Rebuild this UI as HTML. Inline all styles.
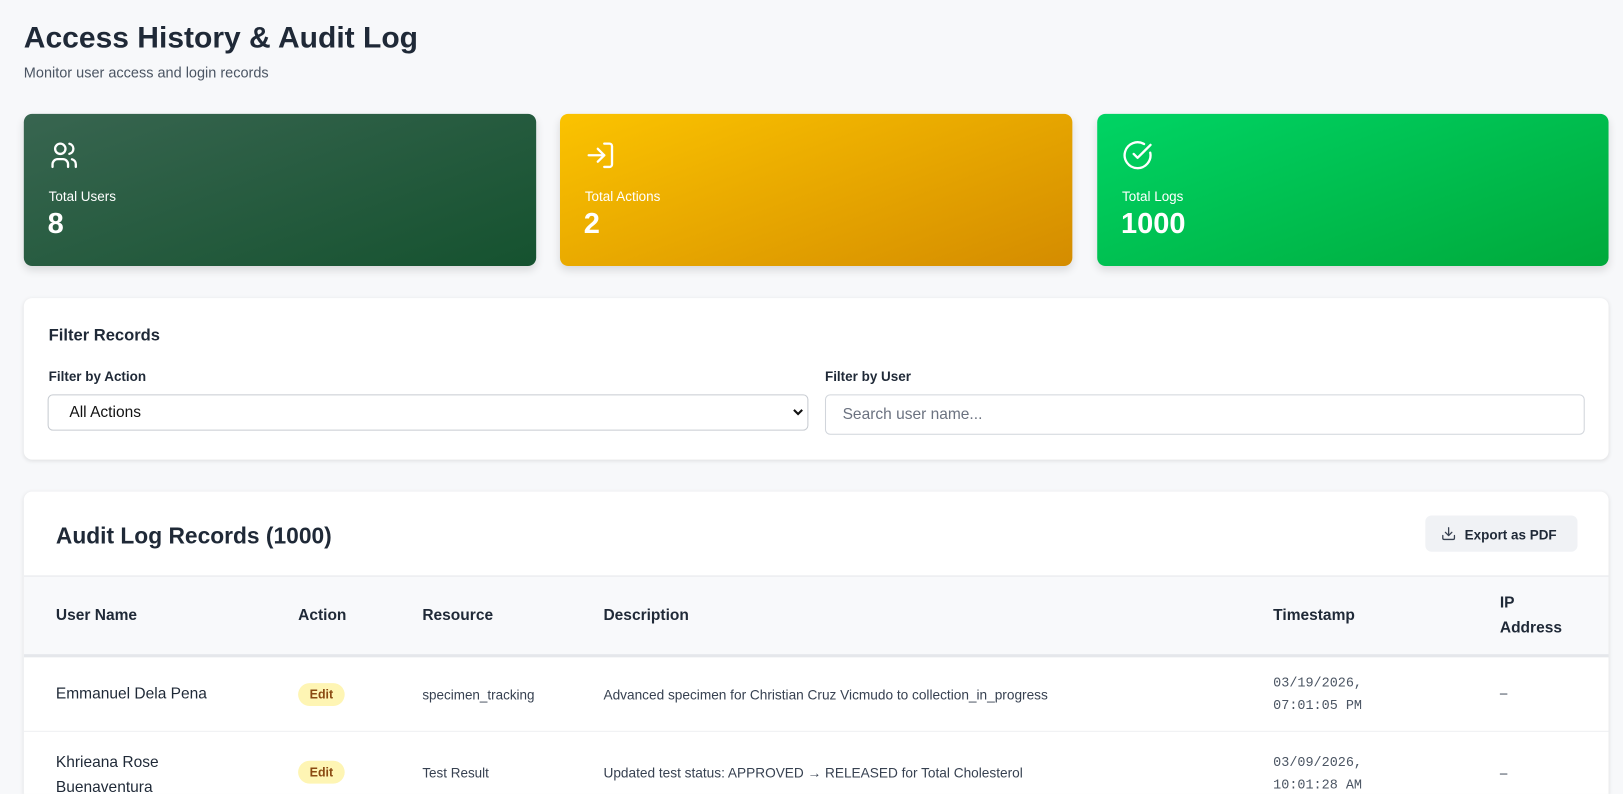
<!DOCTYPE html>
<html><head><style>
*{box-sizing:border-box;margin:0;padding:0}
html,body{width:1623px;height:794px;overflow:hidden;background:#f7f8fa}
body{font-family:"Liberation Sans",Arial,sans-serif;color:#1f2937;position:relative}
#w{position:absolute;left:0;top:0;width:1568px;height:767px;overflow:hidden;transform:scale(1.0351);transform-origin:0 0}
.a{position:absolute}
h1{position:absolute;left:23px;top:21px;font-size:29px;font-weight:700;color:#1f2937}
.card{position:absolute;top:110px;height:147px;width:495px;border-radius:8px;box-shadow:0 4px 8px rgba(0,0,0,.12);color:#fff}
.card svg{position:absolute;left:24px;top:25px}
.card .l{position:absolute;left:24px;top:72px;font-size:13px}
.card .n{position:absolute;left:23px;top:90px;font-size:28px;font-weight:700}
.panel{position:absolute;left:23px;width:1531px;background:#fff;border-radius:8px;box-shadow:0 1px 4px rgba(0,0,0,.1)}
.lab{position:absolute;font-size:13px;font-weight:700;color:#1f2937}
.th{position:absolute;font-size:15px;font-weight:700;color:#1f2937;line-height:24px}
.td{position:absolute;font-size:13px;color:#374151}
.mono{font-family:"Liberation Mono",monospace;font-size:13px;line-height:22px;color:#4b5563}
.badge{position:absolute;left:265px;width:45px;height:22px;border-radius:11px;background:#fef5b4;color:#8a4a12;font-size:12px;font-weight:700;text-align:center;line-height:22px}
</style></head><body><div id="w">
<h1>Access History &amp; Audit Log</h1>
<div class="a" style="left:23px;top:62px;font-size:14px;color:#4b5563">Monitor user access and login records</div>

<div class="card" style="left:23px;background:linear-gradient(160deg,#386550,#15522f)">
<svg width="30" height="30" viewBox="0 0 24 24" fill="none" stroke="#fff" stroke-width="1.8" stroke-linecap="round"><circle cx="9" cy="7" r="4"/><path d="M3 21v-2a4 4 0 0 1 4-4h4a4 4 0 0 1 4 4v2"/><path d="M16 3.1a4 4 0 0 1 0 7.8"/><path d="M21 21v-2a4 4 0 0 0-3-3.9"/></svg>
<div class="l">Total Users</div><div class="n">8</div></div>
<div class="card" style="left:541px;background:linear-gradient(160deg,#fbc300,#d48c00)">
<svg width="30" height="30" viewBox="0 0 24 24" fill="none" stroke="#fff" stroke-width="1.8" stroke-linecap="round" stroke-linejoin="round"><path d="M15 3h4a2 2 0 0 1 2 2v14a2 2 0 0 1-2 2h-4"/><path d="M10 17l5-5-5-5"/><path d="M15 12H3"/></svg>
<div class="l">Total Actions</div><div class="n">2</div></div>
<div class="card" style="left:1060px;width:494px;background:linear-gradient(160deg,#00d464,#00a93b)">
<svg width="30" height="30" viewBox="0 0 24 24" fill="none" stroke="#fff" stroke-width="1.8" stroke-linecap="round" stroke-linejoin="round"><path d="M21.8 10A10 10 0 1 1 17 3.3"/><path d="M9 11l3 3L22 4"/></svg>
<div class="l">Total Logs</div><div class="n">1000</div></div>

<div class="panel" style="top:288px;height:156px">
<div class="a" style="left:24px;top:28px;font-size:16px;font-weight:700">Filter Records</div>
<div class="lab" style="left:24px;top:68px">Filter by Action</div>
<div class="lab" style="left:774px;top:68px">Filter by User</div>
<div class="a" style="left:23px;top:93px;width:735px;height:35px;border:1px solid #c7cbd1;border-radius:5px;font-size:15px;padding:8px 0 0 20px;color:#111">All Actions
<svg class="a" style="right:4px;top:12px" width="10" height="8" viewBox="0 0 10 8"><path d="M1 2l4 4 4-4" stroke="#111" stroke-width="2" fill="none"/></svg></div>
<div class="a" style="left:774px;top:93px;width:734px;height:39px;border:1px solid #d1d5db;border-radius:5px;font-size:15px;padding:10px 0 0 16px;color:#6b7280">Search user name...</div>
</div>

<div class="panel" style="top:475px;height:320px;overflow:hidden">
<div class="a" style="left:31px;top:30px;font-size:22px;font-weight:700">Audit Log Records (1000)</div>
<div class="a" style="left:1354px;top:23px;width:147px;height:35px;background:#f0f2f5;border-radius:6px;font-size:13px;font-weight:700;padding:11px 0 0 38px">Export as PDF
<svg class="a" style="left:15px;top:10px" width="15" height="15" viewBox="0 0 24 24" fill="none" stroke="#374151" stroke-width="2" stroke-linecap="round" stroke-linejoin="round"><path d="M21 15v4a2 2 0 0 1-2 2H5a2 2 0 0 1-2-2v-4"/><path d="M7 10l5 5 5-5"/><path d="M12 15V3"/></svg></div>
<div class="a" style="left:0;top:81px;width:1531px;height:79px;background:#f8f9fb;border-top:1px solid #e5e7eb;border-bottom:3px solid #e5e7eb"></div>
<div class="th" style="left:31px;top:108px">User Name</div>
<div class="th" style="left:265px;top:108px">Action</div>
<div class="th" style="left:385px;top:108px">Resource</div>
<div class="th" style="left:560px;top:108px">Description</div>
<div class="th" style="left:1207px;top:108px">Timestamp</div>
<div class="th" style="left:1426px;top:96px">IP<br>Address</div>

<div class="td" style="left:31px;top:187px;font-size:15px;color:#1f2937">Emmanuel Dela Pena</div>
<div class="badge" style="top:185px">Edit</div>
<div class="td" style="left:385px;top:189px">specimen_tracking</div>
<div class="td" style="left:560px;top:189px;font-size:13.2px">Advanced specimen for Christian Cruz Vicmudo to collection_in_progress</div>
<div class="td mono" style="left:1207px;top:174px">03/19/2026,<br>07:01:05 PM</div>
<div class="td" style="left:1426px;top:187px">–</div>
<div class="a" style="left:0;top:231px;width:1531px;height:1px;background:#eef0f2"></div>

<div class="td" style="left:31px;top:250px;font-size:15px;line-height:24px;color:#1f2937">Khrieana Rose<br>Buenaventura</div>
<div class="badge" style="top:260px">Edit</div>
<div class="td" style="left:385px;top:264px">Test Result</div>
<div class="td" style="left:560px;top:264px;font-size:13.2px">Updated test status: APPROVED → RELEASED for Total Cholesterol</div>
<div class="td mono" style="left:1207px;top:251px">03/09/2026,<br>10:01:28 AM</div>
<div class="td" style="left:1426px;top:264px">–</div>
</div>
</div></body></html>
